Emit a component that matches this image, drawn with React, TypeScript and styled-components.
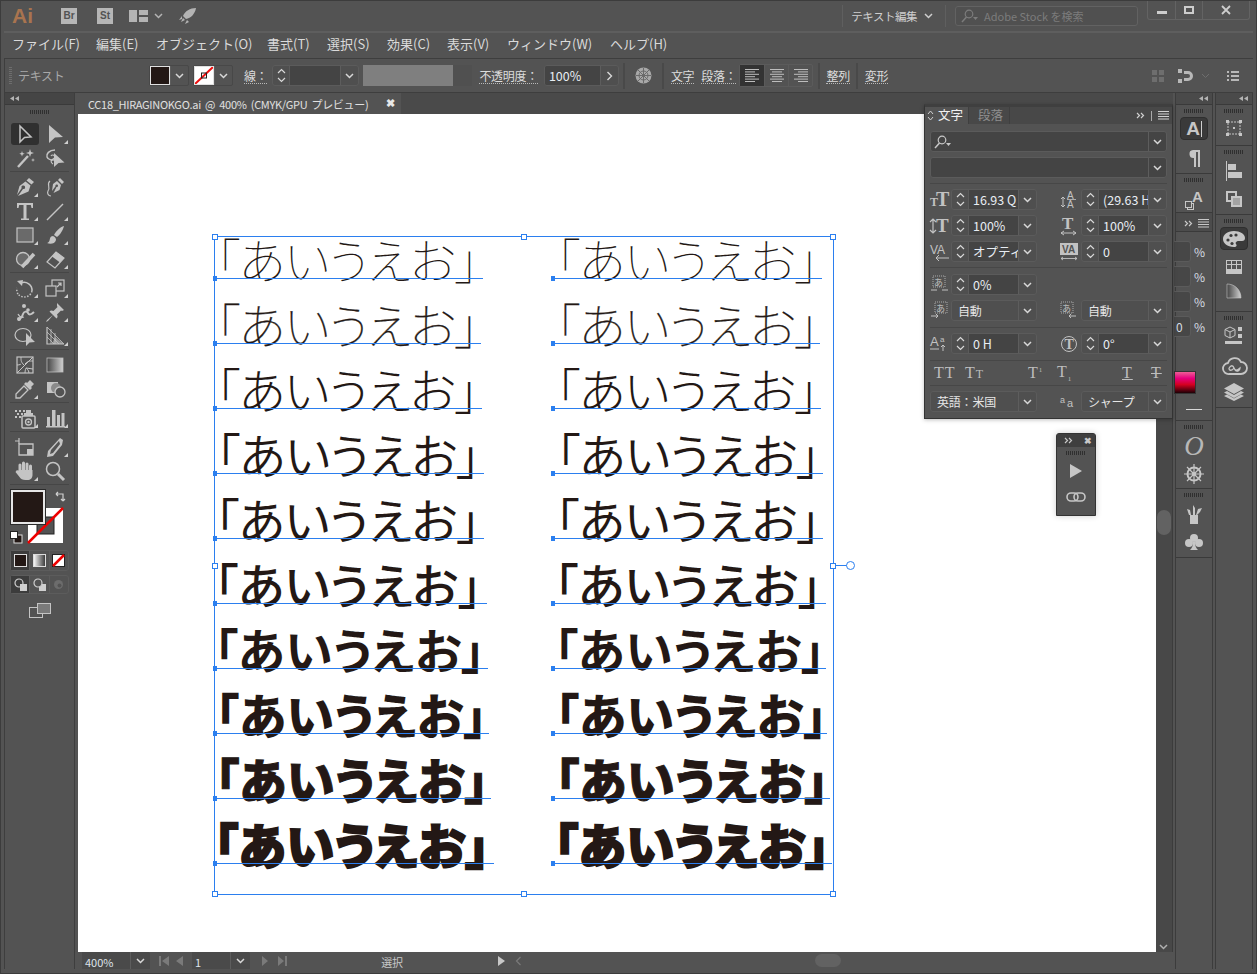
import React from 'react';
import styled, { createGlobalStyle } from 'styled-components';

const UI_FONT = '"Noto Sans CJK JP", "Noto Sans", sans-serif';

const GlobalStyle = createGlobalStyle`
    html, body { margin: 0; padding: 0; background: #535353; }
    * { box-sizing: border-box; }
`;

const Window = styled.div`
    position: relative;
    width: 1257px;
    height: 974px;
    overflow: hidden;
    display: flex;
    flex-direction: column;
    padding: 0 3px 4px 3px;
    background: #535353;
    border: 1px solid #3c3c3c;
    color: #d4d4d4;
    font: 13px ${UI_FONT};
`;

/* title bar */
const TitleBar = styled.div`
    height: 32px;
    flex: none;
    display: flex;
    align-items: center;
    border-bottom: 2px solid #5e5e5e;
    padding-left: 8px;
    position: relative;
`;
const AiLogo = styled.span`
    width: 49px;
    font: bold 21px "Liberation Sans", sans-serif;
    color: #a9744f;
`;
const AppBadge = styled.span<{ $gap: number }>`
    width: 16px;
    height: 16px;
    margin-right: ${p => p.$gap}px;
    background: #b6b6b6;
    color: #535353;
    font: bold 10px/16px "Liberation Sans", sans-serif;
    text-align: center;
`;
const TitleIcon = styled.span<{ $gap?: number }>`
    display: flex;
    color: #b4b4b4;
    margin-right: ${p => p.$gap ?? 0}px;
`;
const TitleSpacer = styled.div`
    flex: 1;
`;
const WorkspaceLabel = styled.div`
    display: flex;
    align-items: center;
    height: 22px;
    padding: 0 12px 0 8px;
    margin-right: 9px;
    gap: 7px;
    border-left: 1px solid #5f5f5f;
    border-right: 1px solid #5f5f5f;
    font-size: 11.5px;
    color: #cfcfcf;
    letter-spacing: -0.5px;
`;
const StockSearch = styled.div`
    width: 183px;
    height: 20px;
    display: flex;
    align-items: center;
    gap: 4px;
    padding-left: 4px;
    border: 1px solid #626262;
    border-radius: 3px;
    background: #505050;
    font-size: 11px;
    color: #7c7c7c;
`;
const WindowButtons = styled.div`
    align-self: flex-start;
    display: flex;
    height: 19px;
    margin: 0 3px 0 9px;
    border: 1px solid #636363;
    border-top: 0;
    border-radius: 0 0 3px 3px;
`;
const WindowButton = styled.div<{ $w: number }>`
    width: ${p => p.$w}px;
    display: flex;
    align-items: center;
    justify-content: center;
    color: #cdcdcd;
    & + & { border-left: 1px solid #636363; }
`;

/* menu */
const MenuBar = styled.div`
    height: 25px;
    flex: none;
    display: flex;
    align-items: center;
    padding: 0 0 4px 8px;
    font-size: 13px;
    color: #dadada;
`;
const MenuItem = styled.span<{ $w: number }>`
    width: ${p => p.$w}px;
    white-space: nowrap;
`;

/* control bar */
const ControlBar = styled.div`
    height: 35px;
    flex: none;
    display: flex;
    align-items: center;
    border-top: 1px solid #3e3e3e;
    border-bottom: 1px solid #3e3e3e;
    border-left: 1px solid #3e3e3e;
    position: relative;
`;
const Grip = styled.span`
    width: 3px;
    height: 17px;
    margin-left: 4px;
    background: repeating-linear-gradient(#6d6d6d 0 1px, transparent 1px 2px);
`;
const ControlLabel = styled.span<{ $w?: number; $dotted?: boolean; $ml?: number; $dim?: boolean }>`
    ${p => (p.$w ? `width: ${p.$w}px;` : '')}
    margin-left: ${p => p.$ml ?? 0}px;
    font-size: 12px;
    line-height: 15px;
    white-space: nowrap;
    letter-spacing: -0.3px;
    color: ${p => (p.$dim ? '#a8a8a8' : '#dcdcdc')};
    ${p => (p.$dotted ? 'border-bottom: 1px dotted #b8b8b8;' : '')}
`;
const ControlSep = styled.span<{ $ml: number; $mr: number }>`
    width: 2px;
    height: 26px;
    margin: 0 ${p => p.$mr}px 0 ${p => p.$ml}px;
    background: #494949;
`;
const SwatchCombo = styled.div<{ $ml: number }>`
    display: flex;
    height: 21px;
    margin-left: ${p => p.$ml}px;
    border: 1px solid #484848;
    border-radius: 2px;
`;
const Swatch = styled.span<{ $color: string }>`
    width: 20px;
    height: 19px;
    background: ${p => p.$color};
    outline: 1px solid #e0e0e0;
    outline-offset: -1px;
    display: block;
`;
const ChevBox = styled.span<{ $w?: number; $dim?: boolean }>`
    width: ${p => p.$w ?? 18}px;
    flex: none;
    display: flex;
    align-items: center;
    justify-content: center;
    color: ${p => (p.$dim ? '#6e6e6e' : '#d8d8d8')};
    border-left: 1px solid #5d5d5d;
`;
const FieldShell = styled.div<{ $w: number; $ml?: number }>`
    display: flex;
    flex: none;
    width: ${p => p.$w}px;
    height: 21px;
    margin-left: ${p => p.$ml ?? 0}px;
    border: 1px solid #5b5b5b;
    border-radius: 3px;
    background: #4f4f4f;
    overflow: hidden;
`;
const Stepper = styled.span`
    width: 17px;
    flex: none;
    display: flex;
    align-items: center;
    justify-content: center;
    color: #d8d8d8;
    border-right: 1px solid #5b5b5b;
`;
const FieldValue = styled.span<{ $pad?: number }>`
    flex: 1;
    min-width: 0;
    overflow: hidden;
    white-space: nowrap;
    padding-left: ${p => p.$pad ?? 4}px;
    background: #444444;
    font-size: 12.5px;
    line-height: 20px;
    color: #e8edf3;
`;
const GrayBlock = styled.div`
    width: 109px;
    height: 21px;
    margin-left: 4px;
    display: flex;
    background: #505050;
    &::before { content: ''; width: 90px; background: #7f7f7f; }
`;
const AlignGroup = styled.div`
    display: flex;
    height: 23px;
    margin-left: 3px;
    border: 1px solid #5b5b5b;
    border-radius: 2px;
`;
const AlignButton = styled.span<{ $on?: boolean }>`
    width: 24px;
    display: flex;
    align-items: center;
    justify-content: center;
    color: #bdbdbd;
    background: ${p => (p.$on ? '#333333' : 'transparent')};
    & + & { border-left: 1px solid #5b5b5b; }
`;
const ControlRight = styled.div`
    margin-left: auto;
    display: flex;
    align-items: center;
    color: #6e6e6e;
    padding-right: 14px;
    gap: 9px;
`;
const BrightIcon = styled.span<{ $ml: number }>`
    display: flex;
    color: #b8b8b8;
    margin-left: ${p => p.$ml}px;
`;

/* work area */
const WorkArea = styled.div`
    flex: 1;
    min-height: 0;
    display: flex;
`;
const Toolbox = styled.div`
    width: 71px;
    flex: none;
    margin: 0 3px 0 0;
    padding: 0 5px;
    border-left: 1px solid #3e3e3e;
    border-right: 1px solid #3e3e3e;
    position: relative;
`;
const CollapseHeader = styled.div`
    height: 12px;
    margin: 0 -5px;
    padding: 0 5px;
    background: #454545;
    border-bottom: 1px solid #3a3a3a;
    color: #b4b4b4;
    display: flex;
    align-items: center;
`;
const GripRow = styled.div`
    height: 14px;
    display: flex;
    align-items: center;
    justify-content: center;
    &::before {
        content: '';
        width: 20px;
        height: 4px;
        background: repeating-linear-gradient(90deg, #2f2f2f 0 1px, transparent 1px 2px);
    }
`;
const ToolGroup = styled.div`
    display: grid;
    grid-template-columns: 30px 30px;
    grid-auto-rows: 24px;
    padding: 3px 0 1px;
    border-bottom: 1px solid #464646;
`;
const ToolCell = styled.div<{ $active?: boolean; $fly?: boolean }>`
    position: relative;
    display: flex;
    align-items: center;
    justify-content: center;
    color: #c4c4c4;
    background: ${p => (p.$active ? '#303030' : 'transparent')};
    border-radius: 3px;
    ${p => (p.$active ? 'margin: 1px;' : '')}
    ${p => p.$fly ? `&::after {
        content: '';
        position: absolute;
        right: 2px;
        bottom: 2px;
        border: 2px solid transparent;
        border-right-color: #cfcfcf;
        border-bottom-color: #cfcfcf;
    }` : ''}
`;
const ColorArea = styled.div`
    position: relative;
    height: 60px;
    margin-top: 5px;
`;
const FillChip = styled.div`
    position: absolute;
    left: 1px;
    top: 0;
    z-index: 1;
    width: 34px;
    height: 34px;
    background: #231815;
    border: 2px solid #e6e6e6;
    outline: 1px solid #2b2b2b;
`;
const StrokeChip = styled.div`
    position: absolute;
    left: 18px;
    top: 18px;
    width: 35px;
    height: 35px;
`;
const SwapMark = styled.div`
    position: absolute;
    right: 3px;
    top: 1px;
    color: #d0d0d0;
    display: flex;
`;
const DefaultChip = styled.div`
    position: absolute;
    left: 0;
    top: 41px;
    display: flex;
`;
const ModeGroup = styled.div<{ $mt: number; $h: number }>`
    display: flex;
    height: ${p => p.$h}px;
    margin-top: ${p => p.$mt}px;
    border: 1px solid #5c5c5c;
    border-radius: 3px;
`;
const ModeCell = styled.span<{ $on?: boolean }>`
    flex: 1;
    display: flex;
    align-items: center;
    justify-content: center;
    color: #cfcfcf;
    background: ${p => (p.$on ? '#3c3c3c' : 'transparent')};
    & + & { border-left: 1px solid #5c5c5c; }
`;
const ScreenMode = styled.div`
    display: flex;
    justify-content: center;
    margin-top: 9px;
    color: #c4c4c4;
`;

/* document */
const DocArea = styled.div`
    flex: 1;
    min-width: 0;
    display: flex;
    flex-direction: column;
`;
const TabBar = styled.div`
    height: 21px;
    flex: none;
    background: #4a4a4a;
    display: flex;
`;
const DocTab = styled.div`
    width: 323px;
    height: 21px;
    display: flex;
    align-items: center;
    justify-content: space-between;
    padding: 0 6px 0 10px;
    background: #535353;
    font-size: 11px;
    letter-spacing: -0.3px;
    word-spacing: 2px;
    color: #e0e0e0;
    white-space: nowrap;
`;
const TabClose = styled.span`
    font: bold 11px "Liberation Sans", sans-serif;
    color: #e8e8e8;
`;
const DocBody = styled.div`
    flex: 1;
    min-height: 0;
    display: flex;
`;
const Artboard = styled.div`
    flex: 1;
    position: relative;
    background: #ffffff;
`;
const VScroll = styled.div`
    width: 17px;
    flex: none;
    background: #484848;
    border-right: 1px solid #3c3c3c;
    position: relative;
    color: #b0b0b0;
`;
const VThumb = styled.div`
    position: absolute;
    left: 1px;
    top: 396px;
    width: 14px;
    height: 25px;
    border-radius: 7px;
    background: #626262;
`;
const VDown = styled.span`
    position: absolute;
    left: 3px;
    bottom: 2px;
    display: flex;
`;
const StatusBar = styled.div`
    height: 17px;
    flex: none;
    display: flex;
    align-items: flex-start;
    color: #7a7a7a;
    font-size: 11px;
`;
const StatusField = styled.div<{ $w: number; $ml: number }>`
    width: ${p => p.$w}px;
    height: 17px;
    margin-left: ${p => p.$ml}px;
    flex: none;
    display: flex;
    background: #4a4a4a;
    border-radius: 2px 2px 0 0;
    color: #dfe4ea;
    line-height: 21px;
`;
const StatusValue = styled.span`
    flex: 1;
    padding-left: 3px;
    background: #4a4a4a;
    overflow: hidden;
`;
const StatusNav = styled.span<{ $ml: number; $bright?: boolean }>`
    display: flex;
    margin-left: ${p => p.$ml}px;
    padding-top: 4px;
    ${p => (p.$bright ? 'color: #c8c8c8;' : '')}
`;
const StatusText = styled.span`
    width: 180px;
    margin-left: 15px;
    text-align: center;
    color: #c8c8c8;
    letter-spacing: -0.3px;
    line-height: 21px;
`;
const HThumb = styled.span`
    width: 26px;
    height: 13px;
    margin: 2px 0 0 293px;
    border-radius: 7px;
    background: #626262;
`;

/* canvas text frame */
const BLUE = '#2b7fef';
const TextFrame = styled.div`
    position: absolute;
    left: 136px;
    top: 122px;
    width: 620px;
    height: 659px;
    border: 1px solid ${BLUE};
    display: grid;
    grid-template-columns: 338px 1fr;
`;
const TextColumn = styled.div`
    margin-top: -23px;
    display: grid;
    grid-auto-rows: 65px;
    align-content: start;
`;
const TextRow = styled.div<{ $line: number; $fw: number; $stroke: number }>`
    position: relative;
    width: ${p => p.$line}px;
    height: 65px;
    font-family: "Noto Sans CJK JP", sans-serif;
    font-feature-settings: "palt";
    font-size: 48px;
    font-weight: ${p => p.$fw};
    -webkit-text-stroke: ${p => p.$stroke}px #231815;
    line-height: 48px;
    color: #231815;
    white-space: nowrap;
    &::before {
        content: '';
        position: absolute;
        z-index: 2;
        left: -2px;
        bottom: -2px;
        width: 4px;
        height: 5px;
        background: ${BLUE};
    }
    &::after {
        content: '';
        position: absolute;
        z-index: 1;
        left: 0;
        right: 0;
        bottom: 0;
        height: 1px;
        background: ${BLUE};
    }
`;
const RowText = styled.span<{ $left: number; $track: number }>`
    position: absolute;
    left: ${p => p.$left}px;
    bottom: -3px;
    letter-spacing: ${p => p.$track}px;
`;
const Handle = styled.span<{ $x: string; $y: string }>`
    position: absolute;
    left: calc(${p => p.$x} - 3px);
    top: calc(${p => p.$y} - 3px);
    width: 6px;
    height: 6px;
    background: #ffffff;
    border: 1px solid ${BLUE};
    z-index: 3;
`;
const RotateStem = styled.span`
    position: absolute;
    left: 100%;
    top: calc(50% - 1px);
    width: 14px;
    height: 1px;
    background: ${BLUE};
`;
const RotateKnob = styled.span`
    position: absolute;
    left: calc(100% + 13px);
    top: calc(50% - 5px);
    width: 9px;
    height: 9px;
    border: 1px solid ${BLUE};
    border-radius: 50%;
    background: #ffffff;
`;

/* right docks */
const DockOuter = styled.div`
    width: 38px;
    flex: none;
    margin-left: 2px;
    display: flex;
    flex-direction: column;
    border-left: 1px solid #3c3c3c;
    border-right: 1px solid #3c3c3c;
`;
const DockHeader = styled.div`
    height: 12px;
    flex: none;
    background: #4a4a4a;
    border-bottom: 1px solid #3a3a3a;
    color: #b4b4b4;
    display: flex;
    align-items: center;
    justify-content: flex-end;
    padding-right: 4px;
`;
const DockSection = styled.div<{ $h: number }>`
    height: ${p => p.$h}px;
    flex: none;
    border-bottom: 1px solid #3a3a3a;
    position: relative;
    display: flex;
    flex-direction: column;
    align-items: center;
`;
const DockGrip = styled.div`
    width: 20px;
    height: 4px;
    margin: 4px 0 3px;
    flex: none;
    background: repeating-linear-gradient(90deg, #2f2f2f 0 1px, transparent 1px 2px);
`;
const DockDash = styled.span`
    width: 16px;
    height: 1px;
    margin-top: 8px;
    background: #d8d8d8;
`;
const DockIcon = styled.div<{ $h?: number; $on?: boolean }>`
    width: 28px;
    height: ${p => p.$h ?? 28}px;
    flex: none;
    display: flex;
    align-items: center;
    justify-content: center;
    color: #c6c6c6;
    border-radius: 4px;
    ${p => (p.$on ? 'background: #3a3a3a; border: 1px solid #2f2f2f; height: 23px; margin-top: 1px;' : '')}
`;
const DockLetter = styled.span<{ $size: number; $mb?: number }>`
    font: bold ${p => p.$size}px/1 "Liberation Sans", sans-serif;
    margin-bottom: ${p => p.$mb ?? 0}px;
    color: #c6c6c6;
`;
const Caret = styled.span`
    width: 1px;
    height: 16px;
    margin-left: 1px;
    background: #d0d0d0;
`;
const ItalicO = styled.span`
    font: italic 27px/24px "Liberation Serif", serif;
    color: #b8b8b8;
`;
const SmallSquares = styled.span`
    width: 7px;
    height: 7px;
    margin: 10px 0 0 0;
    border: 1px solid #c6c6c6;
    box-shadow: 2px 2px 0 -1px #535353, 2px 2px 0 0 #c6c6c6;
`;
const SwatchPanelHeader = styled.div`
    height: 19px;
    flex: none;
    display: flex;
    align-items: center;
    justify-content: flex-end;
    padding: 3px 3px 0 0;
    gap: 5px;
    margin-bottom: 7px;
    background: #4c4c4c;
    border-bottom: 1px solid #3a3a3a;
    color: #c8c8c8;
`;
const PercentRow = styled.div`
    height: 25px;
    flex: none;
    display: flex;
    align-items: center;
    font-size: 12px;
    color: #d6dce2;
`;
const PercentField = styled.span`
    width: 17px;
    height: 21px;
    margin-left: -2px;
    margin-right: 3px;
    background: #474747;
    border: 1px solid #5b5b5b;
    border-left: 0;
    border-radius: 0 3px 3px 0;
    line-height: 20px;
    padding-left: 2px;
`;
const GradientChip = styled.div`
    width: 22px;
    height: 23px;
    margin: 32px 0 7px -2px;
    flex: none;
    background: linear-gradient(#ee5f96, #e6007e 30%, #d40020 60%, #1d0006);
    border: 1px solid #333;
`;

/* floating character panel */
const CharPanel = styled.div`
    position: absolute;
    left: 923px;
    top: 103px;
    width: 249px;
    height: 315px;
    z-index: 5;
    background: #535353;
    border: 1px solid #333333;
    border-top: 3px solid #3f3f3f;
    box-shadow: 0 1px 4px rgba(0, 0, 0, 0.25);
    font-size: 12px;
`;
const CharTabs = styled.div`
    height: 17px;
    display: flex;
    align-items: stretch;
    background: #484848;
    color: #d0d0d0;
`;
const SortMark = styled.span`
    width: 10px;
    display: flex;
    align-items: center;
    justify-content: center;
    background: #535353;
`;
const CharTab = styled.span<{ $on?: boolean }>`
    padding: ${p => (p.$on ? '0 5px 0 3px' : '0 6px 0 9px')};
    line-height: 16px;
    font-size: 12.5px;
    color: ${p => (p.$on ? '#f0f0f0' : '#8e8e8e')};
    background: ${p => (p.$on ? '#535353' : 'transparent')};
    border-right: 1px solid #3f3f3f;
`;
const TabTools = styled.span`
    margin-left: auto;
    padding-right: 3px;
    display: flex;
    align-items: center;
    gap: 6px;
`;
const TabDivider = styled.span`
    width: 1px;
    height: 10px;
    background: #aaa;
`;
const CharSection = styled.div<{ $pt: number; $pb: number }>`
    margin: 0 5px;
    padding: ${p => p.$pt}px 0 ${p => p.$pb}px;
    border-bottom: 1px solid #474747;
    display: grid;
    gap: 5px;
    &:last-child { border-bottom: 0; }
`;
const FullField = styled.div`
    height: 21px;
    display: flex;
    border: 1px solid #5b5b5b;
    border-radius: 3px;
    background: #444444;
    color: #c8c8c8;
`;
const FullFieldBody = styled.span`
    flex: 1;
    padding-left: 2px;
    display: flex;
    align-items: center;
`;
const FieldRow = styled.div`
    display: grid;
    grid-template-columns: 107px 107px;
    justify-content: space-between;
    height: 21px;
`;
const FieldCell = styled.div`
    display: flex;
    align-items: center;
    justify-content: flex-end;
    color: #c2c2c2;
    min-width: 0;
`;
const CellIcon = styled.span`
    width: 21px;
    flex: none;
    display: flex;
    justify-content: flex-start;
`;
const DropValue = styled.span`
    flex: 1;
    padding-left: 6px;
    line-height: 19px;
    color: #e6e6e6;
    letter-spacing: -0.2px;
`;
const TypeStyles = styled.div`
    height: 24px;
    display: flex;
    align-items: center;
    font: 16px "Liberation Serif", serif;
    color: #bdbdbd;
`;
const TypeStyle = styled.span<{ $w: number; $pad?: number; $line?: string }>`
    width: ${p => p.$w}px;
    padding-left: ${p => p.$pad ?? 0}px;
    letter-spacing: 1px;
    text-decoration: ${p => p.$line ?? 'none'};
`;
const SmallCap = styled.span`
    font-size: 12px;
`;
const Sub = styled.sup`
    font-size: 7px;
`;
const Low = styled.sub`
    font-size: 7px;
`;

/* small floating panel */
const MiniPanel = styled.div`
    position: absolute;
    left: 1055px;
    top: 432px;
    width: 40px;
    height: 83px;
    z-index: 4;
    background: #535353;
    border: 1px solid #333333;
    border-radius: 3px 3px 0 0;
    box-shadow: 0 0 6px rgba(0, 0, 0, 0.2);
    display: flex;
    flex-direction: column;
    align-items: center;
    color: #c2c2c2;
`;
const MiniHeader = styled.div`
    width: 100%;
    height: 13px;
    flex: none;
    background: #3f3f3f;
    display: flex;
    align-items: center;
    justify-content: space-between;
    padding: 0 3px 0 7px;
    font: bold 9px "Liberation Sans", sans-serif;
    color: #c8c8c8;
`;

const Svg = ({ s = 24, w, h, children }: { s?: number; w?: number; h?: number; children: React.ReactNode }) => (
    <svg width={w ?? s} height={h ?? s} viewBox={`0 0 ${w ?? s} ${h ?? s}`} fill="currentColor" style={{ display: 'block', overflow: 'visible' }}>
        {children}
    </svg>
);

const line = { fill: 'none', stroke: 'currentColor', strokeWidth: 1.5 };

const Chev = ({ dim }: { dim?: boolean }) => (
    <Svg w={9} h={6}><path d="M1 1l3.500 3.500L8 1" fill="none" stroke="currentColor" strokeWidth={dim ? 1 : 1.5} /></Svg>
);
const UpDown = () => (
    <Svg w={11} h={17}><path d="M2 6l3.500-3.500L9 6M2 11l3.500 3.500L9 11" {...line} strokeWidth={1.2} /></Svg>
);
const Collapse = () => (
    <Svg w={9} h={5}><path d="M4 0v5L0 2.500zM9 0v5L5 2.500z" /></Svg>
);
const MenuLines = () => (
    <Svg w={11} h={9}><path d="M0 .5h11M0 3h11M0 5.500h11M0 8h11" stroke="currentColor" strokeWidth={1} /></Svg>
);
const DoubleRight = () => (
    <Svg w={9} h={7}><path d="M1 1l2.500 2.500L1 6M5 1l2.500 2.500L5 6" fill="none" stroke="currentColor" strokeWidth={1.2} /></Svg>
);
const Search = () => (
    <Svg w={20} h={14}>
        <circle cx={9} cy={5} r={3.800} {...line} strokeWidth={1.2} />
        <path d="M6.500 8L2 13" {...line} />
        <path d="M13 8h5l-2.500 3z" />
    </Svg>
);

const AlignIcon = ({ mode }: { mode: 'l' | 'c' | 'r' }) => {
    const rows = [14, 10, 14, 10, 14, 10];
    return (
        <Svg w={14} h={13}>
            {rows.map((w, i) => {
                const x = mode === 'l' ? 0 : mode === 'c' ? (14 - w) / 2 : 14 - w;
                return <rect key={i} x={x} y={i * 2.4} width={w} height={1} />;
            })}
        </Svg>
    );
};

const toolIcons: Record<string, React.ReactNode> = {
    select: <path d="M7 4v16l4.500-4.500 6.500-.5z" {...line} />,
    direct: <path d="M6 3v18l6-5.500 8-.5z" />,
    wand: <><path d="M5 21L15 10" {...line} strokeWidth={2.4} /><path d="M17 3l1 3 3 1-3 1-1 3-1-3-3-1 3-1zM9 5l.7 2 2 .7-2 .7-.7 2-.7-2-2-.7 2-.7zM20 12l.5 1.500 1.500.5-1.500.5-.5 1.500-.5-1.500-1.500-.5 1.500-.5z" /></>,
    lasso: <><path d="M12 4C6 4 3 8 4 11c1 3 6 4 9 2" {...line} /><path d="M8 10a2 2 0 1 1 2 3c-2 1-3 3 0 5" {...line} strokeWidth={1.2} /><path d="M11 7v14l4.500-4 6-.5z" /></>,
    pen: <><path d="M16 3l5 4-2.500 2.500-5-4z" /><path d="M12.500 6.500l5 4-2 6L5 21l5-7a1.800 1.800 0 1 0-1.300-1L4 20l2.500-9z" /></>,
    curve: <><path d="M17 3l4 4-2 2-4-4zM14 6l4 4-1.500 5-6 3 3-6a1.300 1.300 0 1 0-1-.8L9 16l1-7z" /><path d="M7 6C3 9 8 12 5 16c-1 2 0 5 3 5" {...line} strokeWidth={1.2} /></>,
    type: <path d="M4 4h16v5h-1.500l-.7-3H13.500v13.500H16V21H8v-1.500h2.500V6H6.200l-.7 3H4z" />,
    line: <path d="M4 21L20 5" {...line} />,
    rect: <rect x={4} y={5} width={16} height={14} fill="#6a6a6a" stroke="currentColor" strokeWidth={1.2} />,
    brush: <><path d="M21 3c-4 1-8 5-10 9l3 2c3-2 6-7 7-11z" /><path d="M10 13c-3 0-3 3-3.500 4.500C6 19 5 20 4 20c3 1.500 8 1 9-3 .3-1.500-1-3-3-4z" /></>,
    shaper: <><circle cx={10} cy={12} r={6.500} fill="#6a6a6a" stroke="currentColor" strokeWidth={1.3} /><path d="M9 20L21 7" {...line} strokeWidth={3.6} /></>,
    eraser: <><path d="M4 15l9-10 8 6-9 10z" fill="none" stroke="currentColor" strokeWidth={1.2} /><path d="M9 9.500l4-4.500 8 6-4 4.500z" /></>,
    rotate: <><path d="M8 7a8 8 0 0 1 11 8" {...line} /><path d="M4 5l6-1-1 6z" /><path d="M19 15a8 8 0 0 1-14 3" {...line} strokeDasharray="1.500 1.500" /><path d="M5 18a8 8 0 0 1-1-6" {...line} strokeDasharray="1.500 1.500" /></>,
    scale: <><rect x={9} y={4} width={12} height={11} {...line} strokeWidth={1.2} /><rect x={3} y={10} width={10} height={10} fill="#535353" stroke="currentColor" strokeWidth={1.2} /><path d="M14 11l4-4M15 7h3v3" {...line} strokeWidth={1.2} /></>,
    warp: <><path d="M5 20c3-1 4-3 5-6s4-3 5-1 3 2 6-1" {...line} strokeWidth={2} /><path d="M5 14c1 2 3 4 6 3" {...line} strokeWidth={1.2} /><circle cx={6} cy={19} r={2} /><circle cx={11} cy={6} r={2} /><circle cx={15} cy={10} r={1.800} /></>,
    pin: <path d="M14 3l7 7-2 1-1-.5-4 4c1 2 .5 3-.5 4L10 15l-5 6-2 1 1-2 6-5-3.500-3.500c1-1 2-1.500 4-.5l4-4-.5-1z" />,
    free: <><ellipse cx={10} cy={11} rx={8} ry={6.500} {...line} strokeWidth={1.2} /><path d="M7 11h.01M10 11h.01M13 11h.01" {...line} strokeWidth={1.800} /><path d="M13 9v13l3.500-3.500 5.500-.5z" /></>,
    perspective: <><path d="M4 3v17h17" {...line} strokeWidth={1.2} /><path d="M4 3l17 17M4 8l12 12M4 13l7 7M8 5v15M12 9v11" {...line} strokeWidth={.8} /><path d="M12 13l9 7H9z" opacity={.6} /></>,
    mesh: <><rect x={4} y={4} width={16} height={16} {...line} strokeWidth={1.2} /><path d="M4 20L20 4M8 4c0 4 0 5 3 8M20 8c-4 0-5 0-8 3M4 12c3 0 4-1 4-1M12 20c0-3 1-5 1-5M16 20c0-3-3-5-3-5l7 1" {...line} strokeWidth={1} /></>,
    gradient: <rect x={4} y={5} width={16} height={14} fill="url(#toolGrad)" stroke="#bdbdbd" strokeWidth={.8} />,
    eyedrop: <><path d="M17 3l4 4-3 3 1 1-2 2-6-6 2-2 1 1z" /><path d="M11 9l4 4-8 8H3v-4z" {...line} strokeWidth={1.3} /></>,
    blend: <><rect x={4} y={5} width={11} height={11} /><circle cx={13} cy={11} r={5} fill="#8a8a8a" /><circle cx={17} cy={15} r={5} fill="#535353" stroke="currentColor" strokeWidth={1.3} /></>,
    spray: <><path d="M13 4h5v3h2v3h-9V7h2z" /><rect x={9} y={10} width={13} height={12} rx={1} fill="none" stroke="currentColor" strokeWidth={1.5} /><circle cx={15.500} cy={16} r={3} fill="none" stroke="currentColor" strokeWidth={1.3} /><circle cx={15.500} cy={16} r={1.200} /><path d="M2 4h2v2H2zM6 4h2v2H6zM10 4h2v2h-2zM4 7h2v2H4zM8 7h2v2H8zM2 10h2v2H2zM6 10h2v2H6z" /></>,
    graph: <path d="M3 20h19v1.500H3zM4 11h3v9H4zM9 4h3.500v16H9zM14 9h3v11h-3zM18.500 7H21.500v13h-3z" />,
    artboard: <><path d="M6 3v6M2 6h4" {...line} strokeWidth={1.2} /><path d="M6 9h9l5 0v11H6z" {...line} strokeWidth={1.3} /><path d="M14 14h6v6h-6z" /></>,
    slice: <path d="M17 3l3 2-1 5-9 11-6 1 1-6z M8 15l-1 4 3-1 7-9-1-3z" fillRule="evenodd" />,
    hand: <><path d="M7 13V6M10.500 12V4M14 12V5M17.500 13V7" stroke="currentColor" strokeWidth={3} strokeLinecap="round" /><path d="M5.500 11h14v5c0 3-2 5-5 5h-2c-3 0-5-1-6-3l-4-5 1-1.500c1-.5 2 0 3 1z" /></>,
    zoom: <><circle cx={10} cy={10} r={6.500} {...line} strokeWidth={1.500} /><path d="M15 15l6 6" {...line} strokeWidth={3} /></>,
};

const ToolIcon = ({ name }: { name: string }) => <Svg>{toolIcons[name]}</Svg>;

type Tool = [string, boolean];
const toolGroups: Tool[][] = [
    [['select', false], ['direct', true], ['wand', false], ['lasso', false]],
    [['pen', true], ['curve', false], ['type', true], ['line', true], ['rect', true], ['brush', true], ['shaper', true], ['eraser', true]],
    [['rotate', true], ['scale', true], ['warp', true], ['pin', true], ['free', false], ['perspective', true]],
    [['mesh', false], ['gradient', false], ['eyedrop', true], ['blend', false]],
    [['spray', true], ['graph', true]],
    [['artboard', false], ['slice', true], ['hand', true], ['zoom', false]],
];

const menus: [string, number][] = [
    ['ファイル(F)', 84], ['編集(E)', 60], ['オブジェクト(O)', 111], ['書式(T)', 60], ['選択(S)', 60],
    ['効果(C)', 60], ['表示(V)', 60], ['ウィンドウ(W)', 103], ['ヘルプ(H)', 70],
];

const leftLines = [268, 266, 267, 269, 269, 272, 273, 274, 276, 279];
const rightLines = [269, 267, 268, 270, 270, 273, 273, 274, 277, 279];

/* font weight plus an outline stands in for the W0-W9 steps; left and track fit each row's width */
const rows: { fw: number; stroke: number; left: number; track: number }[] = [
    { fw: 100, stroke: 0, left: 1, track: -1.1 },
    { fw: 100, stroke: 0.3, left: 1, track: -1.1 },
    { fw: 300, stroke: 0, left: 1, track: -1.1 },
    { fw: 350, stroke: 0, left: 1, track: -0.8 },
    { fw: 400, stroke: 0, left: 0, track: -0.6 },
    { fw: 500, stroke: 0, left: -1, track: -0.2 },
    { fw: 700, stroke: 0, left: -1, track: -0.1 },
    { fw: 900, stroke: 0, left: 0, track: 0.1 },
    { fw: 900, stroke: 1, left: 0, track: 0.3 },
    { fw: 900, stroke: 2, left: -1, track: 0.6 },
];

const SAMPLE = '「あいうえお」';

const Column = ({ lines, shift }: { lines: number[]; shift: number }) => (
    <TextColumn>
        {lines.map((w, i) => (
            <TextRow key={i} $line={w} $fw={rows[i].fw} $stroke={rows[i].stroke}>
                <RowText $left={rows[i].left + shift} $track={rows[i].track}>{SAMPLE}</RowText>
            </TextRow>
        ))}
    </TextColumn>
);

const StepField = ({ value, w = 86 }: { value: string; w?: number }) => (
    <FieldShell $w={w}>
        <Stepper><UpDown /></Stepper>
        <FieldValue>{value}</FieldValue>
        <ChevBox><Chev /></ChevBox>
    </FieldShell>
);

const SvgText = ({ x, y, size, children, serif = true, weight }: { x: number; y: number; size: number; children: string; serif?: boolean; weight?: string }) => (
    <text x={x} y={y} fontSize={size} fontWeight={weight} fontFamily={serif ? '"Liberation Serif", serif' : '"Liberation Sans", sans-serif'}>{children}</text>
);

const charIcons: Record<string, React.ReactNode> = {
    size: <><SvgText x={0} y={16} size={12} weight="bold">T</SvgText><SvgText x={6} y={16} size={20} weight="bold">T</SvgText></>,
    vscale: <><path d="M3 3v14M0 6l3-3 3 3M0 14l3 3 3-3" {...line} strokeWidth={1.2} /><SvgText x={6} y={16} size={19} weight="bold">T</SvgText></>,
    kern: <><SvgText x={0} y={12} size={12} serif={false}>VA</SvgText><path d="M6 16h13M9 13l-3 3 3 3" {...line} strokeWidth={1} /></>,
    leading: <><SvgText x={7} y={9} size={10} serif={false}>A</SvgText><SvgText x={7} y={18} size={10} serif={false}>A</SvgText><path d="M3 7v10M1 9l2-2 2 2M1 15l2 2 2-2" {...line} strokeWidth={1} /><path d="M7 9.500h9" {...line} strokeWidth={.8} /></>,
    hscale: <><SvgText x={2} y={13} size={17} weight="bold">T</SvgText><path d="M1 17h15M4 15l-3 2 3 2M13 15l3 2-3 2" {...line} strokeWidth={1} /></>,
    track: <><rect x={0} y={1} width={18} height={12} /><text x={2} y={11} fontSize={10} fontWeight="bold" fontFamily='"Liberation Sans", sans-serif' fill="#535353">VA</text><path d="M1 16.500h16M3 15l-2 1.500L3 18M15 15l2 1.500L15 18" {...line} strokeWidth={.9} /></>,
    mojikumi: <><rect x={3} y={1} width={12} height={11} fill="none" stroke="currentColor" strokeWidth={.8} strokeDasharray="1 1" /><text x={4} y={11} fontSize={9} fontFamily={UI_FONT}>あ</text><path d="M1 15h6M12 15h6" {...line} strokeWidth={1} /></>,
    before: <><rect x={5} y={1} width={12} height={11} fill="none" stroke="currentColor" strokeWidth={.8} strokeDasharray="1 1" /><text x={6} y={11} fontSize={9} fontFamily={UI_FONT}>あ</text><path d="M1 15h7M6 13l2 2-2 2" {...line} strokeWidth={1} /></>,
    after: <><rect x={1} y={1} width={12} height={11} fill="none" stroke="currentColor" strokeWidth={.8} strokeDasharray="1 1" /><text x={2} y={11} fontSize={9} fontFamily={UI_FONT}>あ</text><path d="M9 15h7M11 13l-2 2 2 2" {...line} strokeWidth={1} /></>,
    baseline: <><SvgText x={0} y={12} size={13} serif={false}>A</SvgText><SvgText x={10} y={8} size={8} serif={false}>a</SvgText><path d="M0 15h9M13 17v-6M11 13l2-2 2 2" {...line} strokeWidth={1} /></>,
    rotate: <><circle cx={9} cy={10} r={7.500} {...line} strokeWidth={1} /><SvgText x={4.500} y={15} size={14} weight="bold">T</SvgText></>,
};

const CharIcon = ({ name }: { name: string }) => <CellIcon><Svg w={20} h={20}>{charIcons[name]}</Svg></CellIcon>;

const DropField = ({ value, w = 86 }: { value: string; w?: number }) => (
    <FieldShell $w={w}>
        <DropValue>{value}</DropValue>
        <ChevBox $w={18}><Chev /></ChevBox>
    </FieldShell>
);

export default function App() {
    return (
        <Window>
            <GlobalStyle />
            <svg width={0} height={0} style={{ position: 'absolute' }}>
                <defs>
                    <linearGradient id="toolGrad"><stop offset="0" stopColor="#444" /><stop offset="1" stopColor="#d0d0d0" /></linearGradient>
                    <linearGradient id="modeGrad"><stop offset="0" stopColor="#fff" /><stop offset="1" stopColor="#333" /></linearGradient>
                </defs>
            </svg>

            <TitleBar>
                <AiLogo>Ai</AiLogo>
                <AppBadge $gap={20}>Br</AppBadge>
                <AppBadge $gap={16}>St</AppBadge>
                <TitleIcon $gap={6}>
                    <Svg w={19} h={12}><path d="M0 0h8v12H0zM10 0h9v5h-9zM10 7h9v5h-9z" /></Svg>
                </TitleIcon>
                <TitleIcon $gap={16}><Chev /></TitleIcon>
                <TitleIcon>
                    <Svg w={18} h={16}><path d="M17 0C11 0 6 3 4 8l3 3c5-1 9-5 10-11zM3 8L0 12l3-1zM8 12l-2 4 4-2zM4 10l-2 4 4-2z" /></Svg>
                </TitleIcon>
                <TitleSpacer />
                <WorkspaceLabel>テキスト編集 <Chev /></WorkspaceLabel>
                <StockSearch><Search />Adobe Stock を検索</StockSearch>
                <WindowButtons>
                    <WindowButton $w={27}><Svg w={10} h={10}><rect x={0} y={6} width={10} height={3} /></Svg></WindowButton>
                    <WindowButton $w={27}><Svg w={10} h={10}><path d="M0 1h10v8H0zM2 3v4h6V3z" fillRule="evenodd" /></Svg></WindowButton>
                    <WindowButton $w={47}><Svg w={10} h={10}><path d="M1 1l8 8M9 1l-8 8" fill="none" stroke="currentColor" strokeWidth={1.8} /></Svg></WindowButton>
                </WindowButtons>
            </TitleBar>

            <MenuBar>
                {menus.map(([label, w]) => <MenuItem key={label} $w={w}>{label}</MenuItem>)}
            </MenuBar>

            <ControlBar>
                <Grip />
                <ControlLabel $w={131} $ml={6} $dim>テキスト</ControlLabel>
                <SwatchCombo $ml={0}>
                    <Swatch $color="#231815" />
                    <ChevBox><Chev /></ChevBox>
                </SwatchCombo>
                <SwatchCombo $ml={4}>
                    <Swatch $color="#ffffff">
                        <Svg w={20} h={19}><path d="M1 18L19 1" stroke="#ee1111" strokeWidth={2} /><rect x={7.500} y={7} width={5} height={5} fill="none" stroke="#222" /></Svg>
                    </Swatch>
                    <ChevBox><Chev /></ChevBox>
                </SwatchCombo>
                <ControlLabel $ml={11} $dotted>線：</ControlLabel>
                <FieldShell $w={87} $ml={5}>
                    <Stepper><UpDown /></Stepper>
                    <FieldValue />
                    <ChevBox><Chev /></ChevBox>
                </FieldShell>
                <GrayBlock />
                <ControlLabel $ml={7} $dotted>不透明度：</ControlLabel>
                <FieldShell $w={75} $ml={6}>
                    <FieldValue>100%</FieldValue>
                    <ChevBox><Svg w={7} h={10}><path d="M1.500 1l4 4-4 4" fill="none" stroke="currentColor" strokeWidth={1.4} /></Svg></ChevBox>
                </FieldShell>
                <ControlSep $ml={4} $mr={10} />
                <TitleIcon>
                    <Svg w={17} h={17}><circle cx={8.500} cy={8.500} r={8} fill="#a8a8a8" /><path d="M8.500 1v15M1 8.500h15M3 3l11 11M14 3L3 14" stroke="#6a6a6a" strokeWidth={1} /><circle cx={8.500} cy={8.500} r={4.500} fill="none" stroke="#6a6a6a" /></Svg>
                </TitleIcon>
                <ControlSep $ml={10} $mr={7} />
                <ControlLabel $dotted>文字</ControlLabel>
                <ControlLabel $ml={7} $dotted>段落：</ControlLabel>
                <AlignGroup>
                    <AlignButton $on><AlignIcon mode="l" /></AlignButton>
                    <AlignButton><AlignIcon mode="c" /></AlignButton>
                    <AlignButton><AlignIcon mode="r" /></AlignButton>
                </AlignGroup>
                <ControlSep $ml={5} $mr={6} />
                <ControlLabel $dotted>整列</ControlLabel>
                <ControlSep $ml={6} $mr={7} />
                <ControlLabel $dotted>変形</ControlLabel>
                <ControlRight>
                    <Svg w={12} h={12}><path d="M0 0h5v5H0zM7 0h5v5H7zM0 7h5v5H0zM7 7h5v5H7z" /></Svg>
                    <BrightIcon $ml={5}>
                        <Svg w={14} h={14}><path d="M0 0h4v4H0zM0 10h4v4H0zM6 2h4a5 5 0 0 1 0 10H6v-3h4a2 2 0 0 0 0-4H6z" /></Svg>
                    </BrightIcon>
                    <Chev dim />
                    <BrightIcon $ml={8}>
                        <Svg w={12} h={10}><path d="M0 0h2v2H0zM4 0h8v2H4zM0 4h2v2H0zM4 4h8v2H4zM0 8h2v2H0zM4 8h8v2H4z" /></Svg>
                    </BrightIcon>
                </ControlRight>
            </ControlBar>

            <WorkArea>
                <Toolbox>
                    <CollapseHeader><Collapse /></CollapseHeader>
                    <GripRow />
                    {toolGroups.map((group, g) => (
                        <ToolGroup key={g}>
                            {group.map(([name, fly]) => (
                                <ToolCell key={name} $active={name === 'select'} $fly={fly}><ToolIcon name={name} /></ToolCell>
                            ))}
                        </ToolGroup>
                    ))}
                    <ColorArea>
                        <FillChip />
                        <StrokeChip>
                            <Svg w={35} h={35}>
                                <rect width={35} height={35} fill="#fff" />
                                <rect x={9} y={9} width={17} height={17} fill="#535353" stroke="#222" />
                                <path d="M0 35L35 0" stroke="#ee0000" strokeWidth={2.500} />
                            </Svg>
                        </StrokeChip>
                        <SwapMark>
                            <Svg w={11} h={11}><path d="M1 3h7v7M1 3l2-2M1 3l2 2M8 10l-2-2M8 10l2-2" fill="none" stroke="currentColor" strokeWidth={1.2} /></Svg>
                        </SwapMark>
                        <DefaultChip>
                            <Svg w={12} h={12}>
                                <rect x={4} y={4} width={8} height={8} fill="#231815" stroke="#ddd" />
                                <rect x={0.500} y={0.500} width={7} height={7} fill="#fff" stroke="#222" />
                            </Svg>
                        </DefaultChip>
                    </ColorArea>
                    <ModeGroup $mt={0} $h={21}>
                        <ModeCell $on><Svg w={13} h={13}><rect x={.5} y={.5} width={12} height={12} fill="#231815" stroke="#ddd" /></Svg></ModeCell>
                        <ModeCell><Svg w={13} h={13}><rect x={.5} y={.5} width={12} height={12} fill="url(#modeGrad)" stroke="#ddd" /></Svg></ModeCell>
                        <ModeCell><Svg w={13} h={13}><rect x={.5} y={.5} width={12} height={12} fill="#fff" stroke="#222" /><path d="M1 12L12 1" stroke="#ee0000" strokeWidth={2.5} /></Svg></ModeCell>
                    </ModeGroup>
                    <ModeGroup $mt={4} $h={19}>
                        <ModeCell $on><Svg w={13} h={13}><circle cx={5} cy={5} r={4} fill="none" stroke="currentColor" strokeWidth={1.2} /><rect x={6} y={6} width={7} height={7} /></Svg></ModeCell>
                        <ModeCell><Svg w={13} h={13}><rect x={6} y={6} width={7} height={7} /><circle cx={5} cy={5} r={4} fill="#535353" stroke="currentColor" strokeWidth={1.2} /></Svg></ModeCell>
                        <ModeCell><Svg w={11} h={11}><circle cx={5.500} cy={5.500} r={4.500} fill="#6c6c6c" /><circle cx={6.500} cy={6.500} r={2} fill="#535353" /></Svg></ModeCell>
                    </ModeGroup>
                    <ScreenMode>
                        <Svg w={22} h={15}>
                            <rect x={.5} y={4.500} width={13} height={10} fill="none" stroke="currentColor" />
                            <rect x={8.500} y={.5} width={13} height={10} fill="#7a7a7a" stroke="currentColor" />
                        </Svg>
                    </ScreenMode>
                </Toolbox>

                <DocArea>
                    <TabBar>
                        <DocTab>
                            CC18_HIRAGINOKGO.ai @ 400% (CMYK/GPU プレビュー)
                            <TabClose>✖</TabClose>
                        </DocTab>
                    </TabBar>
                    <DocBody>
                        <Artboard>
                            <TextFrame>
                                <Column lines={leftLines} shift={0} />
                                <Column lines={rightLines} shift={2} />
                                <Handle $x="0%" $y="0%" />
                                <Handle $x="50%" $y="0%" />
                                <Handle $x="100%" $y="0%" />
                                <Handle $x="0%" $y="50%" />
                                <Handle $x="100%" $y="50%" />
                                <Handle $x="0%" $y="100%" />
                                <Handle $x="50%" $y="100%" />
                                <Handle $x="100%" $y="100%" />
                                <RotateStem />
                                <RotateKnob />
                            </TextFrame>
                        </Artboard>
                        <VScroll>
                            <VThumb />
                            <VDown><Chev /></VDown>
                        </VScroll>
                    </DocBody>
                    <StatusBar>
                        <StatusField $w={68} $ml={4}>
                            <StatusValue>400%</StatusValue>
                            <ChevBox $w={20}><Chev /></ChevBox>
                        </StatusField>
                        <StatusNav $ml={9}>
                            <Svg w={26} h={10}><path d="M0 0h2v10H0zM10 0v10L3 5zM24 0v10l-7-5z" /></Svg>
                        </StatusNav>
                        <StatusField $w={58} $ml={7}>
                            <StatusValue>1</StatusValue>
                            <ChevBox $w={20}><Chev /></ChevBox>
                        </StatusField>
                        <StatusNav $ml={12}>
                            <Svg w={25} h={10}><path d="M0 0v10l6-5zM16 0v10l6-5zM23 0h2v10h-2z" /></Svg>
                        </StatusNav>
                        <StatusText>選択</StatusText>
                        <StatusNav $ml={16} $bright>
                            <Svg w={8} h={10}><path d="M0 0v10l7-5z" /></Svg>
                        </StatusNav>
                        <StatusNav $ml={9}>
                            <Svg w={7} h={10}><path d="M5.500 1l-4 4 4 4" fill="none" stroke="currentColor" strokeWidth={1.2} /></Svg>
                        </StatusNav>
                        <HThumb />
                    </StatusBar>
                </DocArea>

                <DockOuter>
                    <DockHeader><Collapse /></DockHeader>
                    <DockSection $h={69}>
                        <DockGrip />
                        <DockIcon $on><DockLetter $size={19}>A</DockLetter><Caret /></DockIcon>
                        <DockIcon $h={36}>
                            <Svg w={14} h={18}><path d="M6 1h7v17h-2V3H9v15H7V9a4 4 0 0 1-1-8z" /></Svg>
                        </DockIcon>
                    </DockSection>
                    <DockSection $h={39}>
                        <DockGrip />
                        <DockIcon><SmallSquares /><DockLetter $size={15} $mb={5}>A</DockLetter></DockIcon>
                    </DockSection>
                    <SwatchPanelHeader><DoubleRight /><MenuLines /></SwatchPanelHeader>
                    <PercentRow><PercentField />%</PercentRow>
                    <PercentRow><PercentField />%</PercentRow>
                    <PercentRow><PercentField />%</PercentRow>
                    <PercentRow><PercentField>0</PercentField>%</PercentRow>
                    <GradientChip />
                    <DockSection $h={20}><DockDash /></DockSection>
                    <DockSection $h={68}>
                        <DockGrip />
                        <DockIcon $h={28}><ItalicO>O</ItalicO></DockIcon>
                        <DockIcon $h={28}>
                            <Svg w={20} h={20}>
                                <circle cx={10} cy={10} r={6.500} fill="none" stroke="currentColor" strokeWidth={2} />
                                <circle cx={10} cy={10} r={2} />
                                <path d="M10 0v20M0 10h20M3 3l14 14M17 3L3 17" stroke="currentColor" strokeWidth={1.200} />
                            </Svg>
                        </DockIcon>
                    </DockSection>
                    <DockSection $h={69}>
                        <DockGrip />
                        <DockIcon $h={28}>
                            <Svg w={18} h={20}><path d="M5 11h8v9H5zM4 11L2 5l3 1 1 5zM8 11V1l2 3v7zM11 11l2-6 4-1-2 4-3 3z" /></Svg>
                        </DockIcon>
                        <DockIcon $h={28}>
                            <Svg w={18} h={18}><circle cx={9} cy={5} r={4} /><circle cx={4} cy={10} r={4} /><circle cx={14} cy={10} r={4} /><path d="M8 9h2c0 4 1 6 3 8H5c2-2 3-4 3-8z" /></Svg>
                        </DockIcon>
                    </DockSection>
                </DockOuter>

                <DockOuter>
                    <DockHeader><Collapse /></DockHeader>
                    <DockSection $h={41}>
                        <DockGrip />
                        <DockIcon $h={24}>
                            <Svg w={16} h={16}><path d="M0 0h3v3H0zM13 0h3v3h-3zM0 13h3v3H0zM13 13h3v3h-3zM7 7h2v2H7z" /><path d="M2 2h12v12H2z" fill="none" stroke="currentColor" strokeWidth={1} strokeDasharray="2 1" /></Svg>
                        </DockIcon>
                    </DockSection>
                    <DockSection $h={69}>
                        <DockGrip />
                        <DockIcon $h={28}>
                            <Svg w={16} h={20}><rect x={0} y={0} width={1} height={20} /><rect x={2} y={3} width={8} height={6} /><rect x={2} y={11} width={14} height={6} /></Svg>
                        </DockIcon>
                        <DockIcon $h={28}>
                            <Svg w={16} h={16}><path d="M0 0h11v5h5v11H5v-5H0zM2 2v7h3V5h4V2zM7 7v7h7V7z" fillRule="evenodd" /><rect x={7} y={7} width={7} height={7} opacity={.7} /></Svg>
                        </DockIcon>
                    </DockSection>
                    <DockSection $h={97}>
                        <DockGrip />
                        <DockIcon $on>
                            <Svg w={24} h={18}>
                                <path d="M12 1C5 1 1 5 1 9s4 8 11 8c3 0 3-2 2-3s0-3 3-3h3c2 0 3-1 3-3 0-4-5-7-11-7z" />
                                <circle cx={6} cy={10} r={1.600} fill="#3a3a3a" /><circle cx={9} cy={5.500} r={1.600} fill="#3a3a3a" /><circle cx={14} cy={5} r={1.600} fill="#3a3a3a" /><circle cx={10} cy={13.500} r={1.600} fill="#3a3a3a" />
                            </Svg>
                        </DockIcon>
                        <DockIcon $h={33}>
                            <Svg w={16} h={14}><path d="M0 0h16v14H0zM1 1v3h4V1zM6 1v3h4V1zM11 1v3h4V1zM1 5v4h4V5zM6 5v4h4V5zM11 5v4h4V5z" fillRule="evenodd" /></Svg>
                        </DockIcon>
                        <DockIcon $h={16}>
                            <Svg w={16} h={16}><path d="M1 1c8 0 14 6 14 14H1z" fill="url(#toolGrad)" stroke="currentColor" strokeWidth={.6} /></Svg>
                        </DockIcon>
                    </DockSection>
                    <DockSection $h={96}>
                        <DockGrip />
                        <DockIcon $h={26}>
                            <Svg w={20} h={20}><path d="M6 1l5 2.500v6L6 12 1 9.500v-6zM1 3.500L6 6l5-2.500M6 6v6" fill="none" stroke="currentColor" strokeWidth={1} /><path d="M14 1h4v4h-4zM14 8h4v4h-4zM1 15h17v3H1z" /></Svg>
                        </DockIcon>
                        <DockIcon $h={34}>
                            <Svg w={24} h={18}><path d="M7 17a5.500 5.500 0 0 1-1-11 7 7 0 0 1 13-1 6 6 0 0 1 0 12z" fill="none" stroke="currentColor" strokeWidth={1.800} /><path d="M7 11c2-3 4-3 5 0s3 3 6 0c0 3-3 4-5 2M7 11c0 3 3 3 5 0" fill="none" stroke="currentColor" strokeWidth={1.3} /></Svg>
                        </DockIcon>
                        <DockIcon $h={18}>
                            <Svg w={20} h={18}><path d="M10 0l10 5.500L10 11 0 5.500z" /><path d="M0 9.500l3-1.500 7 4 7-4 3 1.500-10 5.500zM0 13l3-1.500 7 4 7-4 3 1.500-10 5z" /></Svg>
                        </DockIcon>
                    </DockSection>
                </DockOuter>
            </WorkArea>

            <CharPanel>
                <CharTabs>
                    <SortMark><Svg w={7} h={11}><path d="M1 4l2.500-3L6 4M1 7l2.500 3L6 7" fill="none" stroke="currentColor" strokeWidth={1} /></Svg></SortMark>
                    <CharTab $on>文字</CharTab>
                    <CharTab>段落</CharTab>
                    <TabTools><DoubleRight /><TabDivider /><MenuLines /></TabTools>
                </CharTabs>
                <CharSection $pt={7} $pb={5}>
                    <FullField>
                        <FullFieldBody><Search /></FullFieldBody>
                        <ChevBox><Chev /></ChevBox>
                    </FullField>
                    <FullField>
                        <FullFieldBody />
                        <ChevBox><Chev /></ChevBox>
                    </FullField>
                </CharSection>
                <CharSection $pt={5} $pb={5}>
                    <FieldRow>
                        <FieldCell><CharIcon name="size" /><StepField value="16.93 Q" /></FieldCell>
                        <FieldCell><CharIcon name="leading" /><StepField value="(29.63 H" /></FieldCell>
                    </FieldRow>
                    <FieldRow>
                        <FieldCell><CharIcon name="vscale" /><StepField value="100%" /></FieldCell>
                        <FieldCell><CharIcon name="hscale" /><StepField value="100%" /></FieldCell>
                    </FieldRow>
                    <FieldRow>
                        <FieldCell><CharIcon name="kern" /><StepField value="オプティカル" /></FieldCell>
                        <FieldCell><CharIcon name="track" /><StepField value="0" /></FieldCell>
                    </FieldRow>
                </CharSection>
                <CharSection $pt={6} $pb={6}>
                    <FieldRow>
                        <FieldCell><CharIcon name="mojikumi" /><StepField value="0%" /></FieldCell>
                    </FieldRow>
                    <FieldRow>
                        <FieldCell><CharIcon name="before" /><DropField value="自動" /></FieldCell>
                        <FieldCell><CharIcon name="after" /><DropField value="自動" /></FieldCell>
                    </FieldRow>
                </CharSection>
                <CharSection $pt={5} $pb={6}>
                    <FieldRow>
                        <FieldCell><CharIcon name="baseline" /><StepField value="0 H" /></FieldCell>
                        <FieldCell><CharIcon name="rotate" /><StepField value="0°" /></FieldCell>
                    </FieldRow>
                </CharSection>
                <CharSection $pt={0} $pb={0}>
                    <TypeStyles>
                        <TypeStyle $w={35} $pad={4}>TT</TypeStyle>
                        <TypeStyle $w={63}>T<SmallCap>T</SmallCap></TypeStyle>
                        <TypeStyle $w={29}>T<Sub>1</Sub></TypeStyle>
                        <TypeStyle $w={65}>T<Low>1</Low></TypeStyle>
                        <TypeStyle $w={29} $line="underline">T</TypeStyle>
                        <TypeStyle $w={12} $line="line-through">T</TypeStyle>
                    </TypeStyles>
                </CharSection>
                <CharSection $pt={5} $pb={0}>
                    <FieldRow>
                        <FieldCell><DropField value="英語：米国" w={107} /></FieldCell>
                        <FieldCell>
                            <CellIcon><Svg w={18} h={16}><text x={0} y={9} fontSize={9} fontFamily='"Liberation Sans", sans-serif'>a</text><text x={7} y={13} fontSize={11} fontFamily='"Liberation Sans", sans-serif'>a</text></Svg></CellIcon>
                            <DropField value="シャープ" />
                        </FieldCell>
                    </FieldRow>
                </CharSection>
            </CharPanel>

            <MiniPanel>
                <MiniHeader><DoubleRight /><span>✖</span></MiniHeader>
                <DockGrip />
                <DockIcon $h={26}><Svg w={14} h={14}><path d="M1 0v14l12-7z" /></Svg></DockIcon>
                <DockIcon $h={26}>
                    <Svg w={20} h={10}><rect x={1} y={1} width={11} height={8} rx={4} fill="none" stroke="currentColor" strokeWidth={1.6} /><rect x={8} y={1} width={11} height={8} rx={4} fill="none" stroke="currentColor" strokeWidth={1.6} /></Svg>
                </DockIcon>
            </MiniPanel>
        </Window>
    );
}
